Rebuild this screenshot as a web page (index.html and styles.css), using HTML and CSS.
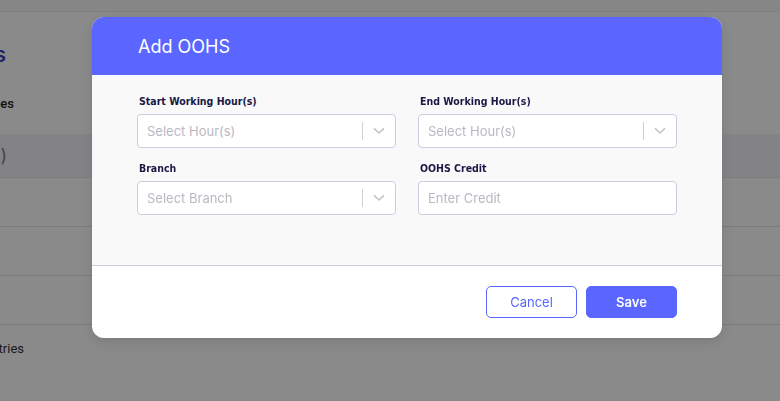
FILE: index.html
```html
<!DOCTYPE html>
<html lang="en">
<head>
<meta charset="utf-8">
<title>Add OOHS</title>
<link rel="stylesheet" href="styles.css">
</head>
<body>
<div class="page">
  <div class="topbar"></div>
  <div class="content">
    <h2 class="page-title clip-end w-title"><span>Schedules</span></h2>
    <div class="sub clip-end w-sub"><span>Out of Hours Schedules</span></div>
    <div class="table">
      <div class="thead"><div class="th clip-end w-th"><span>Working Hour(s)</span></div></div>
      <div class="row"></div>
      <div class="row"></div>
      <div class="row"></div>
    </div>
    <div class="entries clip-end w-entries"><span>Showing 1 to 3 of 3 entries</span></div>
  </div>
</div>

<div class="overlay">
  <div class="modal">
    <div class="modal-header">
      <h3 class="modal-title">Add OOHS</h3>
    </div>
    <div class="modal-body">
      <div class="form-grid">
        <div class="field">
          <label class="label">Start Working Hour(s)</label>
          <div class="select">
            <span class="placeholder">Select Hour(s)</span>
            <span class="sep"></span>
            <svg class="chev" width="12" height="8" viewBox="0 0 12 8"><path d="M1.5 1.8 L6 6 L10.5 1.8" fill="none" stroke="#c3c3ca" stroke-width="1.6" stroke-linecap="round" stroke-linejoin="round"/></svg>
          </div>
        </div>
        <div class="field">
          <label class="label">End Working Hour(s)</label>
          <div class="select">
            <span class="placeholder">Select Hour(s)</span>
            <span class="sep"></span>
            <svg class="chev" width="12" height="8" viewBox="0 0 12 8"><path d="M1.5 1.8 L6 6 L10.5 1.8" fill="none" stroke="#c3c3ca" stroke-width="1.6" stroke-linecap="round" stroke-linejoin="round"/></svg>
          </div>
        </div>
        <div class="field">
          <label class="label">Branch</label>
          <div class="select">
            <span class="placeholder">Select Branch</span>
            <span class="sep"></span>
            <svg class="chev" width="12" height="8" viewBox="0 0 12 8"><path d="M1.5 1.8 L6 6 L10.5 1.8" fill="none" stroke="#c3c3ca" stroke-width="1.6" stroke-linecap="round" stroke-linejoin="round"/></svg>
          </div>
        </div>
        <div class="field">
          <label class="label">OOHS Credit</label>
          <div class="input"><span class="placeholder">Enter Credit</span></div>
        </div>
      </div>
    </div>
    <div class="modal-footer">
      <button class="btn btn-outline">Cancel</button>
      <button class="btn btn-primary">Save</button>
    </div>
  </div>
</div>
</body>
</html>
```

FILE: styles.css
```css
* { box-sizing: border-box; }
html, body { margin: 0; padding: 0; }
body {
  width: 780px;
  height: 401px;
  overflow: hidden;
  background: #ffffff;
  font-family: "Inter", "Noto Sans", sans-serif;
}

/* background page (partly hidden behind the left edge) */
.page { height: 401px; }
.topbar {
  height: 12px;
  background: #f8f8f8;
  border-bottom: 1px solid #ececec;
}
.content { padding-top: 30px; }
.clip-end {
  display: flex;
  justify-content: flex-end;
  white-space: nowrap;
}
.w-title { width: 6px; }
.w-sub { width: 14px; }
.w-th { width: 7px; }
.w-entries { width: 24px; }

.page-title {
  margin: 0;
  font-family: "Inter", sans-serif;
  font-size: 21px;
  font-weight: 600;
  color: #3a45b8;
  line-height: 26px;
}
.sub {
  margin-top: 28px;
  font-family: "Roboto", sans-serif;
  font-size: 13px;
  font-weight: 500;
  color: #222;
  line-height: 16px;
}
.table { margin-top: 22px; }
.thead {
  height: 44px;
  background: #f2f3f8;
  border-bottom: 1px solid #e6e7ee;
  display: flex;
  align-items: center;
}
.th {
  font-family: "Inter", sans-serif;
  font-size: 18px;
  color: #7a7f90;
}
.row {
  height: 49px;
  border-bottom: 1px solid #e2e3ea;
}
.entries {
  margin-top: 16px;
  font-family: "Roboto", sans-serif;
  font-size: 13px;
  color: #333;
}

/* overlay + modal */
.overlay {
  position: fixed;
  inset: 0;
  background: rgba(0, 0, 0, 0.46);
  display: flex;
  justify-content: center;
  align-items: flex-start;
  padding-top: 17px;
  padding-left: 34px;
}
.modal {
  width: 630px;
  border-radius: 12px;
  overflow: hidden;
  background: #ffffff;
  box-shadow: 0 4px 14px rgba(0, 0, 0, 0.12);
}
.modal-header {
  height: 58px;
  background: #5a66ff;
  display: flex;
  align-items: center;
  padding: 0 46px;
}
.modal-title {
  margin: 0;
  font-family: "Inter", sans-serif;
  font-weight: 400;
  font-size: 18px;
  color: #ffffff;
}
.modal-body {
  background: #f9f9f9;
  padding: 18px 45px 50px;
  border-bottom: 1px solid #c9cde0;
}
.form-grid {
  display: grid;
  grid-template-columns: 1fr 1fr;
  column-gap: 22px;
  row-gap: 12px;
}
.field { display: flex; flex-direction: column; }
.label {
  display: block;
  height: 16px;
  line-height: 16px;
  margin: 0 0 5px 2px;
  font-family: "DejaVu Sans Condensed", "DejaVu Sans", sans-serif;
  font-stretch: condensed;
  font-weight: 700;
  font-size: 10.5px;
  color: #1a1844;
}
.select, .input {
  height: 34px;
  background: #ffffff;
  border: 1px solid #c9cde2;
  border-radius: 4px;
  display: flex;
  align-items: center;
  padding-left: 9px;
}
.placeholder {
  flex: 1;
  font-family: "Inter", sans-serif;
  font-size: 13px;
  color: #b9b9c2;
  white-space: nowrap;
}
.sep {
  width: 1px;
  height: 18px;
  background: #cfd0d6;
}
.chev { margin: 0 10px 0 10px; }

.modal-footer {
  height: 72px;
  display: flex;
  justify-content: flex-end;
  align-items: flex-start;
  padding: 20px 45px 0;
  gap: 9px;
}
.btn {
  width: 91px;
  height: 32px;
  border-radius: 5px;
  font-family: "Inter", sans-serif;
  font-size: 13px;
  cursor: pointer;
}
.btn-outline {
  background: #ffffff;
  border: 1px solid #5a66ff;
  color: #5a66ff;
}
.btn-primary {
  background: #5a66ff;
  border: 1px solid #5a66ff;
  color: #ffffff;
  font-weight: 600;
}
```
